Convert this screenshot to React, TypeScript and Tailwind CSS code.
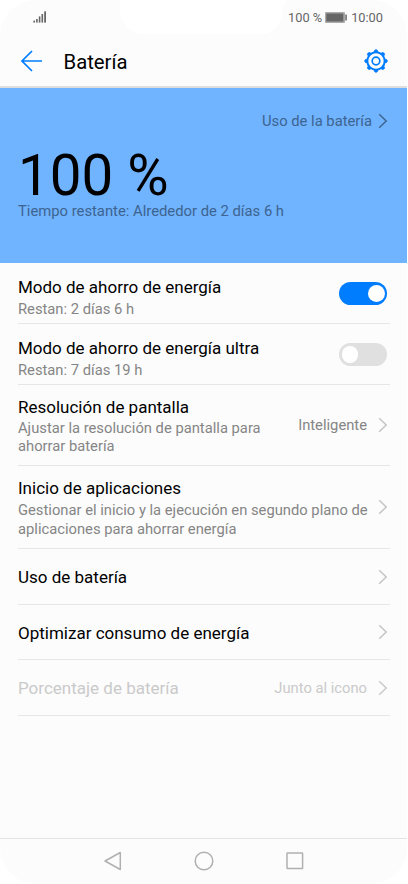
import { useState } from "react";
import clsx from "clsx";

function Chevron({ className }: { className?: string }) {
  return (
    <svg
      viewBox="0 0 10 16"
      className={clsx("w-2.5 h-4 shrink-0", className)}
      fill="none"
      stroke="currentColor"
      strokeWidth="1.5"
    >
      <path d="M1.2 1.2 8.2 8l-7 6.8" />
    </svg>
  );
}

function Toggle({ on, onChange }: { on: boolean; onChange: () => void }) {
  return (
    <button
      role="switch"
      aria-checked={on}
      onClick={onChange}
      className={clsx(
        "flex items-center px-[2.5px] rounded-full w-12 h-[23px] shrink-0",
        on ? "justify-end bg-[#007dff]" : "justify-start bg-[#e0e0e0]"
      )}
    >
      <span className="bg-white rounded-full w-[16.5px] h-[16.5px]" />
    </button>
  );
}

function StatusBar() {
  return (
    <div className="flex justify-between h-[34px] text-[#666]">
      <svg viewBox="0 0 14 12" className="mt-[11px] ml-[33px] w-3.5 h-3" fill="currentColor">
        <rect x="0.4" y="9.6" width="1.6" height="2" />
        <rect x="3.1" y="8" width="1.6" height="3.6" />
        <rect x="5.8" y="5.4" width="1.6" height="6.2" />
        <rect x="8.5" y="3" width="1.6" height="8.6" />
        <rect x="11.2" y="0.4" width="1.8" height="11.2" />
      </svg>
      {/* Notch */}
      <svg viewBox="0 0 166 35" className="-mb-px ml-[73px] w-[166px] h-[35px] shrink-0" fill="#fff">
        <path d="M-8 0C-2 1 0 4 0 10 1 23 10 34 24 34H140C154 34 162 24 163 10 163 4 166 1 172 0Z" />
      </svg>
      <div className="flex flex-1 items-center pl-[2px] h-[35px] text-[12.8px] whitespace-nowrap">
        <span>100 %</span>
        <svg viewBox="0 0 22 11" className="ml-[3px] w-[22px] h-[11px]" fill="currentColor">
          <rect x="0" y="0" width="20" height="11" rx="1" fill="#aaa" />
          <rect x="1.3" y="1.5" width="17" height="8" />
          <rect x="20.3" y="2.5" width="1.5" height="6" />
        </svg>
        <span className="ml-[4px]">10:00</span>
      </div>
    </div>
  );
}

function GearIcon() {
  return (
    <svg viewBox="0 0 24 24" className="w-6 h-6" fill="none" stroke="#007dff">
      <circle cx="12" cy="12" r="8.7" strokeWidth="2" />
      <circle cx="12" cy="12" r="3.8" strokeWidth="1.7" />
      {[0, 45, 90, 135, 180, 225, 270, 315].map((deg) => (
        <path
          key={deg}
          d="M9.9 3.4 11 .9h2l1.1 2.5Z"
          fill="#007dff"
          strokeWidth="0.9"
          strokeLinejoin="round"
          transform={`rotate(${deg} 12 12)`}
        />
      ))}
    </svg>
  );
}

const title = "text-[17px] leading-5 whitespace-nowrap";
const sub = "text-[14.75px] text-[#858585]";

export default function App() {
  const [saving, setSaving] = useState(true);
  const [ultra, setUltra] = useState(false);

  return (
    <div className="bg-white w-[408px] h-[884px] overflow-hidden font-[Roboto,sans-serif] text-black">
      <div className="flex flex-col bg-[#fcfcfc] rounded-[36px] w-[407px] h-[884px] overflow-hidden">
        <StatusBar />

        {/* Header */}
        <header className="flex items-center pt-0.5 pr-[19px] pl-[21px] border-[#dedede] border-b-2 h-[54px] shrink-0">
          <svg viewBox="0 0 22 22" className="w-[22px] h-[22px]" fill="none" stroke="#007dff" strokeWidth="1.7">
            <path d="M11 1 1 11l10 10M1 11h20" />
          </svg>
          <h1 className="ml-[20.5px] pt-px text-[20.3px] leading-7">Batería</h1>
          <button className="ml-auto">
            <GearIcon />
          </button>
        </header>

        {/* Battery level */}
        <section className="flex flex-col bg-[#70b3ff] pt-[24px] pr-[19px] pl-[18px] h-[175px] text-[#3d648f] shrink-0">
          <div className="flex justify-end items-center h-[18px] text-[14.75px]">
            <span className="pt-px">Uso de la batería</span>
            <Chevron className="ml-[6px]" />
          </div>
          <p className="mt-[22px] mb-[2px] text-[56.5px] text-black leading-[48px]">100 %</p>
          <p className="text-[14.8px] leading-[18px]">
            Tiempo restante: Alrededor de 2 días 6 h
          </p>
        </section>

        <main className="flex-1 pr-[17px] pl-[18px]">
          <div className="flex justify-between pt-[14px] pr-[3px] border-[#e6e6e6] border-b h-[61px]">
            <div>
              <p className={title}>Modo de ahorro de energía</p>
              <p className={clsx(sub, "mt-[3px] leading-[18px]")}>Restan: 2 días 6 h</p>
            </div>
            <div className="pt-[5px]">
              <Toggle on={saving} onChange={() => setSaving(!saving)} />
            </div>
          </div>

          <div className="flex justify-between pt-[14px] pr-[3px] border-[#e6e6e6] border-b h-[61px]">
            <div>
              <p className={title}>Modo de ahorro de energía ultra</p>
              <p className={clsx(sub, "mt-[3px] leading-[18px]")}>Restan: 7 días 19 h</p>
            </div>
            <div className="pt-[5px]">
              <Toggle on={ultra} onChange={() => setUltra(!ultra)} />
            </div>
          </div>

          <div className="flex justify-between pr-[2px] border-[#e6e6e6] border-b h-[81px]">
            <div className="pt-[12px]">
              <p className={title}>Resolución de pantalla</p>
              <p className={clsx(sub, "mt-[3px] leading-[17.5px]")}>
                Ajustar la resolución de pantalla para
                <br />
                ahorrar batería
              </p>
            </div>
            <div className="flex items-center text-[#c4c4c4]">
              <span className={clsx(sub, "pt-px")}>Inteligente</span>
              <Chevron className="ml-[11px]" />
            </div>
          </div>

          <div className="flex justify-between pr-[2px] border-[#e6e6e6] border-b h-[83px]">
            <div className="pt-[12px]">
              <p className={title}>Inicio de aplicaciones</p>
              <p className={clsx(sub, "mt-[3px] leading-[19px] whitespace-nowrap")}>
                Gestionar el inicio y la ejecución en segundo plano de
                <br />
                aplicaciones para ahorrar energía
              </p>
            </div>
            <Chevron className="self-center text-[#c4c4c4]" />
          </div>

          <div className="flex justify-between items-center pr-[2px] border-[#e6e6e6] border-b h-[56px]">
            <p className={title}>Uso de batería</p>
            <Chevron className="text-[#c4c4c4]" />
          </div>

          <div className="flex justify-between items-center pr-[2px] border-[#e6e6e6] border-b h-[55px]">
            <p className={clsx(title, "pt-px")}>Optimizar consumo de energía</p>
            <Chevron className="text-[#c4c4c4]" />
          </div>

          <div className="flex justify-between items-center pr-[2px] border-[#e6e6e6] border-b h-[56px] text-[#cacaca]">
            <p className={title}>Porcentaje de batería</p>
            <div className="flex items-center">
              <span className="pt-px text-[14.75px]">Junto al icono</span>
              <Chevron className="ml-[11px]" />
            </div>
          </div>
        </main>

        {/* Android navigation */}
        <nav className="flex justify-center items-center gap-[71px] pb-0.5 border-[#e3e3e3] border-t h-[46px] shrink-0">
          <svg viewBox="0 0 20 20" className="w-5 h-5" fill="none" stroke="#b0b0b0" strokeWidth="1.5" strokeLinejoin="round">
            <path d="M17.3 1.5v17L2 10Z" />
          </svg>
          <svg viewBox="0 0 20 20" className="w-5 h-5" fill="none" stroke="#b0b0b0" strokeWidth="1.5">
            <circle cx="10" cy="10" r="8.8" />
          </svg>
          <svg viewBox="0 0 20 20" className="w-5 h-5" fill="none" stroke="#b0b0b0" strokeWidth="1.5">
            <rect x="2" y="2" width="15.6" height="15.6" rx="0.6" />
          </svg>
        </nav>
      </div>
    </div>
  );
}
